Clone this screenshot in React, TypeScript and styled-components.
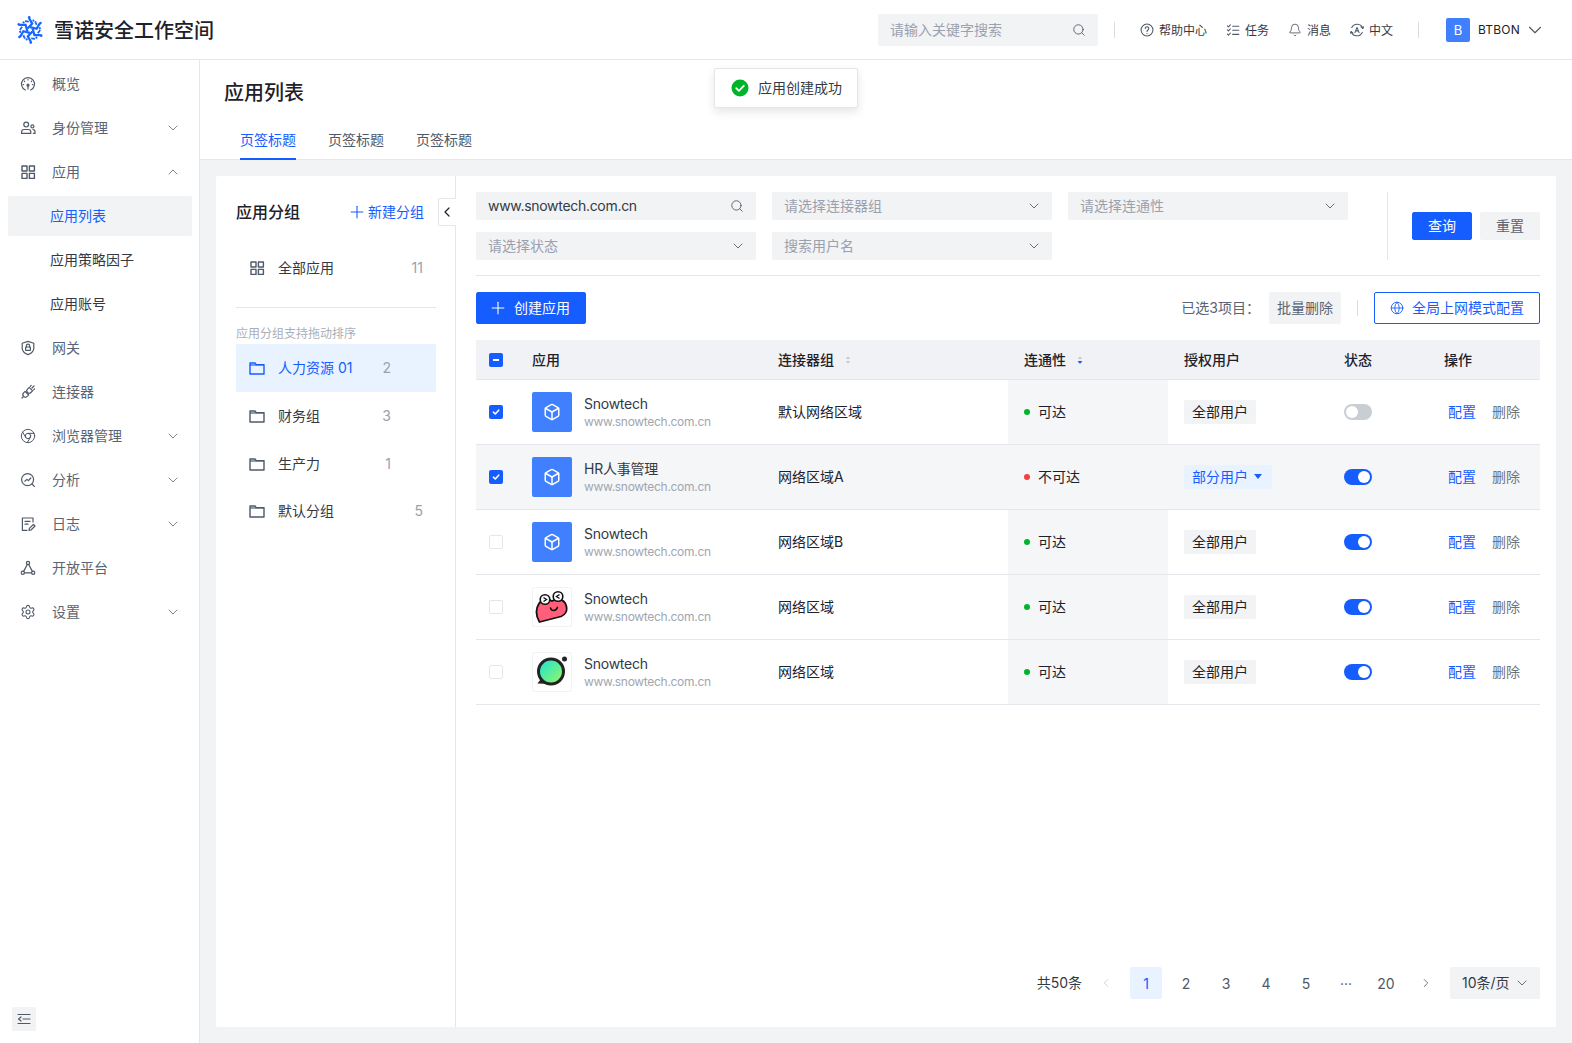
import React from "react";
import styled, { createGlobalStyle } from "styled-components";
import { ChevronDown, ChevronUp, ChevronLeft, ChevronRight, Search, Plus, Globe, Bell, Chrome, Settings, Box } from "lucide-react";

const PRIMARY = "#165dff";

const Global = createGlobalStyle`
  html, body { margin: 0; padding: 0; height: 100%; }
  body { font-family: Inter, "Noto Sans CJK SC", sans-serif; font-size: 14px; color: #1d2129; background: #f2f3f5; }
  * { box-sizing: border-box; }
`;

const Page = styled.div`
  position: relative;
  display: flex;
  flex-direction: column;
  height: 100vh;
  overflow: hidden;
`;
const Txt = styled.span`
  margin-bottom: 2px;
`;
const Header = styled.header`
  height: 60px;
  flex: none;
  display: flex;
  align-items: center;
  padding: 0 26px 0 16px;
  background: #fff;
  border-bottom: 1px solid #e5e6eb;
`;
const Brand = styled.div`
  display: flex;
  align-items: center;
  gap: 10px;
  font-size: 20px;
  font-weight: 500;
  color: #1d2129;
`;
const HeaderRight = styled.div`
  margin-left: auto;
  display: flex;
  align-items: center;
`;
const HeaderSearch = styled.div`
  width: 220px;
  height: 32px;
  display: flex;
  align-items: center;
  justify-content: space-between;
  padding: 0 12px;
  background: #f2f3f5;
  border-radius: 2px;
  color: #9aa1ad;
  svg { color: #4e5969; }
`;
const VRule = styled.span<{ $l: number; $r: number; $h?: number }>`
  width: 1px;
  height: ${(p) => p.$h ?? 16}px;
  background: #d9dce2;
  margin: 0 ${(p) => p.$r}px 0 ${(p) => p.$l}px;
`;
const HeaderLinks = styled.div`
  display: flex;
  gap: 19px;
`;
const HeaderLink = styled.div`
  display: flex;
  align-items: center;
  gap: 5px;
  font-size: 12px;
  color: #343a45;
  svg { width: 14px; height: 14px; color: #4e5969; }
`;
const Avatar = styled.span`
  width: 24px;
  height: 24px;
  display: grid;
  place-items: center;
  background: #4080ff;
  border-radius: 2px;
  color: #fff;
  font-size: 13px;
`;
const UserName = styled.span`
  margin: 0 4px 0 8px;
  font-size: 12px;
  letter-spacing: 0.2px;
  color: #1d2129;
`;
const Body = styled.div`
  flex: 1;
  display: flex;
  min-height: 0;
`;
const Side = styled.aside`
  width: 200px;
  flex: none;
  display: flex;
  flex-direction: column;
  gap: 4px;
  padding: 4px 7px 12px 8px;
  background: #fff;
  border-right: 1px solid #e5e6eb;
`;
const NavItem = styled.div<{ $sub?: boolean; $active?: boolean }>`
  height: 40px;
  flex: none;
  display: flex;
  align-items: center;
  gap: 16px;
  padding: 0 11px 0 ${(p) => (p.$sub ? 42 : 12)}px;
  border-radius: 2px;
  background: ${(p) => (p.$active ? "#f2f3f5" : "transparent")};
  color: ${(p) => (p.$active ? PRIMARY : p.$sub ? "#343a45" : "#5a6473")};
  > svg:first-child { color: #4e5969; }
`;
const NavChevron = styled.span`
  margin-left: auto;
  display: flex;
  color: #6b7480;
`;
const SideFoot = styled.div`
  margin-top: auto;
  width: 24px;
  height: 24px;
  margin-left: 4px;
  display: grid;
  place-items: center;
  background: #f2f3f5;
  border-radius: 2px;
  color: #4e5969;
`;
const Main = styled.main`
  flex: 1;
  min-width: 0;
  display: flex;
  flex-direction: column;
`;
const PageHead = styled.div`
  height: 100px;
  flex: none;
  padding: 17px 24px 0;
  background: #fff;
  border-bottom: 1px solid #e5e6eb;
`;
const PageTitle = styled.h1`
  margin: 0;
  font-size: 20px;
  line-height: 32px;
  font-weight: 500;
  color: #1d2129;
`;
const Tabs = styled.div`
  display: flex;
  gap: 32px;
  margin-top: 19px;
  padding-left: 16px;
`;
const Tab = styled.div<{ $active?: boolean }>`
  height: 32px;
  line-height: 24px;
  color: ${(p) => (p.$active ? PRIMARY : "#4e5969")};
  border-bottom: 2px solid ${(p) => (p.$active ? PRIMARY : "transparent")};
`;
const Card = styled.div`
  flex: 1;
  min-height: 0;
  display: flex;
  margin: 16px;
  background: #fff;
  border-radius: 2px;
`;
const GroupPanel = styled.section`
  position: relative;
  width: 240px;
  flex: none;
  padding: 24px 19px 0 20px;
  border-right: 1px solid #e5e6eb;
`;
const GroupHead = styled.div`
  display: flex;
  align-items: center;
  justify-content: space-between;
  height: 24px;
  padding-right: 12px;
`;
const GroupTitle = styled.div`
  margin-bottom: 2px;
  font-size: 16px;
  font-weight: 500;
`;
const NewGroup = styled.div`
  display: flex;
  align-items: center;
  gap: 1px;
  color: ${PRIMARY};
`;
const Collapse = styled.div`
  position: absolute;
  top: 22px;
  right: -1px;
  width: 18px;
  height: 28px;
  display: grid;
  place-items: center;
  padding-right: 2px;
  background: #fff;
  border: 1px solid #e5e6eb;
  border-right: none;
  border-radius: 2px 0 0 2px;
  color: #1d2129;
`;
const GroupItem = styled.div<{ $active?: boolean; $first?: boolean; $countRight: number }>`
  position: relative;
  height: 48px;
  display: flex;
  align-items: center;
  gap: 13px;
  padding: 0 ${(p) => p.$countRight}px 0 13px;
  margin-top: ${(p) => (p.$first ? 20 : 0)}px;
  border-radius: 2px;
  background: ${(p) => (p.$active ? "#e8f3ff" : "transparent")};
  color: ${(p) => (p.$active ? PRIMARY : "#343a45")};
  svg { color: ${(p) => (p.$active ? PRIMARY : "#4e5969")}; }
  &:last-child { height: 46px; }
`;
const GroupCount = styled.span`
  margin: 0 0 2px auto;
  color: #9aa1ad;
`;
const GroupRule = styled.div`
  height: 1px;
  margin-top: 15px;
  background: #e5e6eb;
`;
const GroupHint = styled.div`
  padding: 17px 0 1px;
  font-size: 12px;
  line-height: 18px;
  color: #a9aeb8;
`;
const Content = styled.section`
  flex: 1;
  min-width: 0;
  display: flex;
  flex-direction: column;
  padding: 16px 16px 28px 20px;
`;
const FilterRow = styled.div`
  display: flex;
  justify-content: space-between;
  padding-bottom: 15px;
  border-bottom: 1px solid #e5e6eb;
`;
const FilterGrid = styled.div`
  display: grid;
  grid-template-columns: repeat(3, 280px);
  gap: 12px 16px;
`;
const Field = styled.div<{ $filled?: boolean }>`
  height: 28px;
  display: flex;
  align-items: center;
  justify-content: space-between;
  padding: 0 10px 0 12px;
  background: #f2f3f5;
  border-radius: 2px;
  color: ${(p) => (p.$filled ? "#343a45" : "#9aa1ad")};
  letter-spacing: ${(p) => (p.$filled ? "-0.3px" : "0")};
  svg { color: #4e5969; }
`;
const FieldSearch = styled.span`
  display: flex;
  margin-right: 2px;
`;
const QueryBox = styled.div`
  display: flex;
  align-items: center;
  gap: 8px;
  padding-left: 24px;
  border-left: 1px solid #e5e6eb;
`;
const Button = styled.button<{ $kind: "primary" | "gray" | "outline"; $w?: number; $h?: number; $gap?: number; $pr?: number }>`
  width: ${(p) => (p.$w ? `${p.$w}px` : "auto")};
  height: ${(p) => p.$h ?? 32}px;
  display: inline-flex;
  align-items: center;
  justify-content: center;
  gap: ${(p) => p.$gap ?? 8}px;
  padding: 0 ${(p) => p.$pr ?? 0}px 0 0;
  font: inherit;
  border-radius: 2px;
  border: 1px solid ${(p) => (p.$kind === "gray" ? "#f2f3f5" : PRIMARY)};
  background: ${(p) => (p.$kind === "primary" ? PRIMARY : p.$kind === "gray" ? "#f2f3f5" : "#fff")};
  color: ${(p) => (p.$kind === "primary" ? "#fff" : p.$kind === "gray" ? "#5a6473" : PRIMARY)};
`;
const Toolbar = styled.div`
  display: flex;
  align-items: center;
  margin-top: 16px;
`;
const ToolRight = styled.div`
  margin-left: auto;
  display: flex;
  align-items: center;
`;
const Selected = styled.span`
  margin: 0 9px 2px 0;
  color: #5a6473;
`;
const TableWrap = styled.div`
  flex: 1;
  margin-top: 16px;
`;
const Row = styled.div<{ $head?: boolean; $hl?: boolean }>`
  display: grid;
  grid-template-columns: 40px 246px 246px 160px 160px 100px 112px;
  height: ${(p) => (p.$head ? 40 : 65)}px;
  background: ${(p) => (p.$head ? "#f1f2f5" : p.$hl ? "#f5f6f8" : "#fff")};
  border-bottom: 1px solid #e5e6eb;
  font-weight: ${(p) => (p.$head ? 500 : 400)};
`;
const Cell = styled.div<{ $sorted?: boolean; $center?: boolean; $gap?: number }>`
  display: flex;
  align-items: center;
  gap: ${(p) => p.$gap ?? 8}px;
  min-width: 0;
  padding-left: ${(p) => (p.$center ? 13 : 16)}px;
  background: ${(p) => (p.$sorted ? "#f5f6f8" : "transparent")};
  color: #1d2129;
  font-size: 14px;
`;
const Check = styled.span<{ $state: "on" | "off" | "mixed" }>`
  width: 14px;
  height: 14px;
  flex: none;
  display: grid;
  place-items: center;
  border-radius: 2px;
  background: ${(p) => (p.$state === "off" ? "#fff" : PRIMARY)};
  border: ${(p) => (p.$state === "off" ? "1.5px solid #e5e6eb" : "none")};
`;
const MixedBar = styled.span`
  width: 6px;
  height: 2px;
  background: #fff;
`;
const AppIcon = styled.span<{ $blue?: boolean }>`
  width: 40px;
  height: 40px;
  flex: none;
  display: grid;
  place-items: center;
  border-radius: 2px;
  background: ${(p) => (p.$blue ? "#4080ff" : "#fff")};
  border: ${(p) => (p.$blue ? "none" : "1px solid #f2f3f5")};
  color: #fff;
`;
const AppText = styled.div`
  margin-left: 4px;
  display: flex;
  flex-direction: column;
`;
const AppName = styled.div`
  line-height: 18px;
  letter-spacing: -0.25px;
  color: #343a45;
`;
const AppUrl = styled.div`
  margin-top: 1px;
  font-size: 12px;
  line-height: 16px;
  letter-spacing: -0.3px;
  color: #a0a6b1;
`;
const Dot = styled.span<{ $ok: boolean }>`
  width: 6px;
  height: 6px;
  border-radius: 50%;
  background: ${(p) => (p.$ok ? "#00b42a" : "#f53f3f")};
`;
const Tag = styled.span<{ $blue?: boolean }>`
  height: 24px;
  display: inline-flex;
  align-items: center;
  gap: 6px;
  padding: 0 ${(p) => (p.$blue ? 10 : 8)}px 2px 8px;
  border-radius: 2px;
  background: ${(p) => (p.$blue ? "#e8f3ff" : "#f2f3f5")};
  color: ${(p) => (p.$blue ? PRIMARY : "#1d2129")};
`;
const Caret = styled.span`
  width: 0;
  height: 0;
  border-left: 4px solid transparent;
  border-right: 4px solid transparent;
  border-top: 5px solid ${PRIMARY};
`;
const Switch = styled.span<{ $on: boolean }>`
  width: 28px;
  height: 16px;
  display: flex;
  align-items: center;
  justify-content: ${(p) => (p.$on ? "flex-end" : "flex-start")};
  padding: 0 2px;
  border-radius: 8px;
  background: ${(p) => (p.$on ? PRIMARY : "#c9cdd4")};
`;
const Knob = styled.span`
  width: 12px;
  height: 12px;
  border-radius: 50%;
  background: #fff;
`;
const Ops = styled.div`
  display: flex;
  gap: 16px;
  margin: 0 0 2px 4px;
`;
const Op = styled.span<{ $blue?: boolean }>`
  color: ${(p) => (p.$blue ? PRIMARY : "#6b7480")};
`;
const Pager = styled.div`
  display: flex;
  justify-content: flex-end;
  align-items: center;
  gap: 8px;
`;
const Total = styled.span`
  margin-bottom: 2px;
  color: #343a45;
`;
const PageBtn = styled.span<{ $active?: boolean; $muted?: boolean }>`
  width: 32px;
  height: 32px;
  display: grid;
  place-items: center;
  border-radius: 2px;
  background: ${(p) => (p.$active ? "#e8f3ff" : "transparent")};
  color: ${(p) => (p.$active ? PRIMARY : p.$muted ? "#c9cdd4" : "#4e5969")};
`;
const SizeSelect = styled.span`
  width: 90px;
  height: 32px;
  display: flex;
  align-items: center;
  justify-content: space-between;
  padding: 0 10px 0 12px;
  background: #f2f3f5;
  border-radius: 2px;
  color: #343a45;
  svg { color: #4e5969; }
`;
const Toast = styled.div`
  position: absolute;
  left: 714px;
  top: 68px;
  height: 40px;
  display: flex;
  align-items: center;
  gap: 9px;
  padding: 0 15px 0 16px;
  background: #fff;
  border: 1px solid #e5e6eb;
  border-radius: 2px;
  color: #343a45;
  box-shadow: 0 4px 10px rgba(0, 0, 0, 0.1);
`;

type IP = { size?: number };
const Ic = ({ size = 16, stroke = 1.2, children }: IP & { stroke?: number; children: React.ReactNode }) => (
  <svg width={size} height={size} viewBox="0 0 16 16" fill="none" stroke="currentColor" strokeWidth={stroke} strokeLinecap="round" strokeLinejoin="round">
    {children}
  </svg>
);
const GaugeIcon = () => (
  <Ic>
    <path d="M5.3 14A6.5 6.5 0 1 1 10.7 14" />
    <path d="M8 9v4" />
    <circle cx="8" cy="9.2" r="1" />
    <path d="M8 3.6v.4M4.4 5.2l.3.3M11.6 5.2l-.3.3M3.2 8.6h.4M12.8 8.6h-.4" />
  </Ic>
);
const UsersIcon = () => (
  <Ic>
    <circle cx="6.2" cy="4.6" r="2.4" />
    <path d="M1.6 13.4v-1.5a2.4 2.4 0 0 1 2.4-2.4h4.4a2.4 2.4 0 0 1 2.4 2.4v1.5z" />
    <circle cx="12.4" cy="6.4" r="1.5" />
    <path d="M13 9.6a2 2 0 0 1 2 2v1.8h-1.6" />
  </Ic>
);
const GridIcon = () => (
  <Ic stroke={1.4}>
    <rect x="2" y="2" width="5" height="5" />
    <rect x="9.4" y="2" width="5" height="5" />
    <rect x="2" y="9.4" width="5" height="5" />
    <rect x="9.4" y="9.4" width="5" height="5" />
  </Ic>
);
const ShieldIcon = () => (
  <Ic>
    <path d="M8 1.4l5.8 1.8v5c0 3.2-2.6 5.2-5.8 6.4-3.2-1.2-5.8-3.2-5.8-6.4v-5z" />
    <rect x="5.6" y="7" width="4.8" height="3.4" rx=".5" />
    <path d="M6.4 7V5.8a1.6 1.6 0 0 1 3.2 0V7" />
  </Ic>
);
const PlugIcon = () => (
  <Ic>
    <path d="M9.2 3.4l3.4 3.4-1.700 1.700a2.400 2.400 0 0 1-3.400-3.400z" />
    <path d="M12 4l2-2M10.200 2.400l1-1M13.600 5.800l1-1" />
    <path d="M5 7.400l3.600 3.600-1.400 1.400a2.500 2.500 0 0 1-3.600-3.600z" />
    <path d="M3.600 12.400L2 14" />
  </Ic>
);
const AnalysisIcon = () => (
  <Ic>
    <circle cx="7.6" cy="7.6" r="6" />
    <path d="M12 12l2.4 2.4" />
    <path d="M4.8 9.2L7 7.4l1.4 1.2 2.4-2.6" />
  </Ic>
);
const LogIcon = () => (
  <Ic>
    <path d="M13 6V2H2.4v12.4H7" />
    <path d="M5 5.4h5M5 8.2h3" />
    <path d="M9 14.4l.4-2 4-4 1.6 1.6-4 4z" />
  </Ic>
);
const NodesIcon = () => (
  <Ic>
    <circle cx="8" cy="3" r="1.6" />
    <circle cx="2.8" cy="12.8" r="1.6" />
    <circle cx="13.2" cy="12.8" r="1.6" />
    <path d="M7.3 4.5L3.6 11.4M8.7 4.5l3.7 6.9M4.4 12.8h7.2" />
  </Ic>
);
const IndentIcon = () => (
  <Ic>
    <path d="M2 3.5h12M7 8h7M2 12.5h12M5 6L2.6 8 5 10" />
  </Ic>
);
const HelpIcon = () => (
  <Ic>
    <circle cx="8" cy="8" r="6.8" />
    <path d="M6 6.2a2 2 0 1 1 3 1.8c-.7.4-1 .8-1 1.6" />
    <path d="M8 11.8v.2" />
  </Ic>
);
const TaskIcon = () => (
  <Ic>
    <path d="M1.6 3.2l1.2 1.2L5 2.2M1.6 7.8L2.8 9 5 6.8M1.6 12.6l1.2 1.2 2.2-2.2" />
    <path d="M7.6 3.6h7M7.6 8.2h7M7.6 13h7" />
  </Ic>
);
const LangIcon = () => (
  <Ic>
    <path d="M2 5.2A6.8 6.8 0 0 1 14.6 6M14 10.8A6.8 6.8 0 0 1 1.4 10" />
    <path d="M12.6 4.4L14.6 6.2l1-2M3.4 11.6L1.4 9.8l-1 2" />
    <path d="M5.6 11L8 5l2.4 6M6.5 9h3" />
  </Ic>
);
const FolderIcon = () => (
  <svg width="16" height="16" viewBox="0 0 16 16" fill="none" stroke="currentColor" strokeWidth={1.4} strokeLinejoin="round">
    <path d="M1 3h5l1.2 1.6H15V14H1z" />
    <path d="M1 5h14" strokeWidth={1.2} />
  </svg>
);
const SortIcon = ({ active }: { active?: boolean }) => (
  <svg width="8" height="10" viewBox="0 0 8 10">
    <path d="M4 1l2.4 3H1.6z" fill="#c9cdd4" />
    <path d="M4 9L1.6 6h4.8z" fill={active ? PRIMARY : "#c9cdd4"} />
  </svg>
);
const SmallCheck = () => (
  <svg width="10" height="10" viewBox="0 0 10 10" fill="none" stroke="#fff" strokeWidth={1.6} strokeLinecap="round" strokeLinejoin="round">
    <path d="M2.4 5.2l1.9 1.8 3.4-3.8" />
  </svg>
);
const SnowLogo = () => (
  <svg width="28" height="28" viewBox="-14 -14 28 28" fill="none" stroke="#1764ff" strokeWidth={2.2}>
    {[0, 60, 120, 180, 240, 300].map((a) => (
      <g key={a} transform={`rotate(${a})`}>
        <path d="M-2.4 -1.6 L2.2 -6.4 L-1 -12" />
        <path d="M-1.2 -8.4 L-5 -8.8" strokeWidth={1.8} />
        <circle cx="-0.8" cy="-12.6" r="1.3" fill="#1764ff" stroke="none" />
        <circle cx="3.4" cy="-9.4" r="1.1" fill="#1764ff" stroke="none" />
      </g>
    ))}
  </svg>
);
const HeartLogo = () => (
  <svg width="38" height="38" viewBox="0 0 38 38">
    <path d="M6.500 34C3 28 2.500 21 6 15.500C9 11 15 11 19 13C24 10 31 11 33 17C35 23 32 27 28 28.500z" fill="#ff5f7a" stroke="#111" strokeWidth={1.8} strokeLinejoin="round" />
    <circle cx="12" cy="11.500" r="4.800" fill="#fff" stroke="#111" strokeWidth={1.6} />
    <circle cx="25" cy="8.500" r="4.800" fill="#fff" stroke="#111" strokeWidth={1.6} />
    <path d="M10.500 9.500l3 2-3 2M26.500 6.500l-3 2 3 2" fill="none" stroke="#111" strokeWidth={1.4} />
    <path d="M17.500 20c1 3.400 5.500 3.200 7-.6" fill="none" stroke="#111" strokeWidth={1.5} strokeLinecap="round" />
  </svg>
);
const BubbleLogo = () => (
  <svg width="38" height="38" viewBox="0 0 38 38">
    <defs>
      <linearGradient id="bubbleFill" x1="0" y1="0" x2="1" y2="1">
        <stop offset="0" stopColor="#12e6da" />
        <stop offset="1" stopColor="#a0f560" />
      </linearGradient>
    </defs>
    <circle cx="18" cy="18.500" r="12.500" fill="url(#bubbleFill)" stroke="#232323" strokeWidth={3} />
    <path d="M8 26l-3.600 4.400 8 .4z" fill="#232323" />
    <circle cx="31.500" cy="6" r="2.500" fill="#232323" />
  </svg>
);

const nav = [
  { label: "概览", icon: <GaugeIcon /> },
  { label: "身份管理", icon: <UsersIcon />, chev: "down" },
  { label: "应用", icon: <GridIcon />, chev: "up" },
  { label: "应用列表", sub: true, active: true },
  { label: "应用策略因子", sub: true },
  { label: "应用账号", sub: true },
  { label: "网关", icon: <ShieldIcon /> },
  { label: "连接器", icon: <PlugIcon /> },
  { label: "浏览器管理", icon: <Chrome size={16} strokeWidth={1.5} />, chev: "down" },
  { label: "分析", icon: <AnalysisIcon />, chev: "down" },
  { label: "日志", icon: <LogIcon />, chev: "down" },
  { label: "开放平台", icon: <NodesIcon /> },
  { label: "设置", icon: <Settings size={16} strokeWidth={1.6} />, chev: "down" },
];
const groups = [
  { name: "人力资源 01", count: 2, right: 45, active: true },
  { name: "财务组", count: 3, right: 45 },
  { name: "生产力", count: 1, right: 45 },
  { name: "默认分组", count: 5, right: 13 },
];
const rows = [
  { name: "Snowtech", logo: "box", zone: "默认网络区域", ok: true, all: true, on: false, check: "on" as const },
  { name: "HR人事管理", logo: "box", zone: "网络区域A", ok: false, all: false, on: true, check: "on" as const, hl: true },
  { name: "Snowtech", logo: "box", zone: "网络区域B", ok: true, all: true, on: true, check: "off" as const },
  { name: "Snowtech", logo: "heart", zone: "网络区域", ok: true, all: true, on: true, check: "off" as const },
  { name: "Snowtech", logo: "bubble", zone: "网络区域", ok: true, all: true, on: true, check: "off" as const },
];

export default function App() {
  return (
    <Page>
      <Global />
      <Header>
        <Brand>
          <SnowLogo />
          雪诺安全工作空间
        </Brand>
        <HeaderRight>
          <HeaderSearch>
            <Txt>请输入关键字搜索</Txt>
            <Search size={14} strokeWidth={1.5} />
          </HeaderSearch>
          <VRule $l={16} $r={25} />
          <HeaderLinks>
            <HeaderLink><HelpIcon />帮助中心</HeaderLink>
            <HeaderLink><TaskIcon />任务</HeaderLink>
            <HeaderLink><Bell strokeWidth={1.5} />消息</HeaderLink>
            <HeaderLink><LangIcon />中文</HeaderLink>
          </HeaderLinks>
          <VRule $l={25} $r={27} />
          <Avatar>B</Avatar>
          <UserName>BTBON</UserName>
          <ChevronDown size={22} strokeWidth={1.2} color="#4e5969" />
        </HeaderRight>
      </Header>
      <Body>
        <Side>
          {nav.map((n) => (
            <NavItem key={n.label} $sub={n.sub} $active={n.active}>
              {n.icon}
              <Txt>{n.label}</Txt>
              {n.chev && (
                <NavChevron>
                  {n.chev === "down" ? <ChevronDown size={16} strokeWidth={1.3} /> : <ChevronUp size={16} strokeWidth={1.3} />}
                </NavChevron>
              )}
            </NavItem>
          ))}
          <SideFoot><IndentIcon /></SideFoot>
        </Side>
        <Main>
          <PageHead>
            <PageTitle>应用列表</PageTitle>
            <Tabs>
              <Tab $active>页签标题</Tab>
              <Tab>页签标题</Tab>
              <Tab>页签标题</Tab>
            </Tabs>
          </PageHead>
          <Card>
            <GroupPanel>
              <GroupHead>
                <GroupTitle>应用分组</GroupTitle>
                <NewGroup><Plus size={20} strokeWidth={1.3} /><Txt>新建分组</Txt></NewGroup>
              </GroupHead>
              <Collapse><ChevronLeft size={16} strokeWidth={1.8} /></Collapse>
              <GroupItem $first $countRight={13}>
                <GridIcon />
                <Txt>全部应用</Txt>
                <GroupCount>11</GroupCount>
              </GroupItem>
              <GroupRule />
              <GroupHint>应用分组支持拖动排序</GroupHint>
              {groups.map((g) => (
                <GroupItem key={g.name} $active={g.active} $countRight={g.right}>
                  <FolderIcon />
                  <Txt>{g.name}</Txt>
                  <GroupCount>{g.count}</GroupCount>
                </GroupItem>
              ))}
            </GroupPanel>
            <Content>
              <FilterRow>
                <FilterGrid>
                  <Field $filled><Txt>www.snowtech.com.cn</Txt><FieldSearch><Search size={14} strokeWidth={1.5} /></FieldSearch></Field>
                  <Field><Txt>请选择连接器组</Txt><ChevronDown size={16} strokeWidth={1.3} /></Field>
                  <Field><Txt>请选择连通性</Txt><ChevronDown size={16} strokeWidth={1.3} /></Field>
                  <Field><Txt>请选择状态</Txt><ChevronDown size={16} strokeWidth={1.3} /></Field>
                  <Field><Txt>搜索用户名</Txt><ChevronDown size={16} strokeWidth={1.3} /></Field>
                </FilterGrid>
                <QueryBox>
                  <Button $kind="primary" $w={60} $h={28}><Txt>查询</Txt></Button>
                  <Button $kind="gray" $w={60} $h={28}><Txt>重置</Txt></Button>
                </QueryBox>
              </FilterRow>
              <Toolbar>
                <Button $kind="primary" $w={110} $gap={6} $pr={4}><Plus size={20} strokeWidth={1.3} /><Txt>创建应用</Txt></Button>
                <ToolRight>
                  <Selected>已选3项目：</Selected>
                  <Button $kind="gray" $w={72}><Txt>批量删除</Txt></Button>
                  <VRule $l={16} $r={16} />
                  <Button $kind="outline" $w={166}><Globe size={14} strokeWidth={1.5} /><Txt>全局上网模式配置</Txt></Button>
                </ToolRight>
              </Toolbar>
              <TableWrap>
                <Row $head>
                  <Cell $center><Check $state="mixed"><MixedBar /></Check></Cell>
                  <Cell><Txt>应用</Txt></Cell>
                  <Cell $gap={10}><Txt>连接器组</Txt><SortIcon /></Cell>
                  <Cell $gap={10}><Txt>连通性</Txt><SortIcon active /></Cell>
                  <Cell><Txt>授权用户</Txt></Cell>
                  <Cell><Txt>状态</Txt></Cell>
                  <Cell><Txt>操作</Txt></Cell>
                </Row>
                {rows.map((r, i) => (
                  <Row key={i} $hl={r.hl}>
                    <Cell $center><Check $state={r.check}>{r.check === "on" && <SmallCheck />}</Check></Cell>
                    <Cell>
                      <AppIcon $blue={r.logo === "box"}>
                        {r.logo === "box" && <Box size={18} strokeWidth={2} />}
                        {r.logo === "heart" && <HeartLogo />}
                        {r.logo === "bubble" && <BubbleLogo />}
                      </AppIcon>
                      <AppText>
                        <AppName>{r.name}</AppName>
                        <AppUrl>www.snowtech.com.cn</AppUrl>
                      </AppText>
                    </Cell>
                    <Cell><Txt>{r.zone}</Txt></Cell>
                    <Cell $sorted><Dot $ok={r.ok} /><Txt>{r.ok ? "可达" : "不可达"}</Txt></Cell>
                    <Cell>
                      {r.all ? <Tag>全部用户</Tag> : <Tag $blue>部分用户<Caret /></Tag>}
                    </Cell>
                    <Cell><Switch $on={r.on}><Knob /></Switch></Cell>
                    <Cell>
                      <Ops><Op $blue>配置</Op><Op>删除</Op></Ops>
                    </Cell>
                  </Row>
                ))}
              </TableWrap>
              <Pager>
                <Total>共50条</Total>
                <PageBtn $muted><ChevronLeft size={14} strokeWidth={1.4} /></PageBtn>
                <PageBtn $active>1</PageBtn>
                <PageBtn>2</PageBtn>
                <PageBtn>3</PageBtn>
                <PageBtn>4</PageBtn>
                <PageBtn>5</PageBtn>
                <PageBtn>···</PageBtn>
                <PageBtn>20</PageBtn>
                <PageBtn><ChevronRight size={14} strokeWidth={1.4} /></PageBtn>
                <SizeSelect><Txt>10条/页</Txt><ChevronDown size={16} strokeWidth={1.3} /></SizeSelect>
              </Pager>
            </Content>
          </Card>
        </Main>
      </Body>
      <Toast>
        <svg width="18" height="18" viewBox="0 0 18 18">
          <circle cx="9" cy="9" r="8.5" fill="#00b42a" />
          <path d="M5.2 9.2l2.7 2.6 4.9-5" fill="none" stroke="#fff" strokeWidth={1.8} strokeLinecap="round" strokeLinejoin="round" />
        </svg>
        <Txt>应用创建成功</Txt>
      </Toast>
    </Page>
  );
}
